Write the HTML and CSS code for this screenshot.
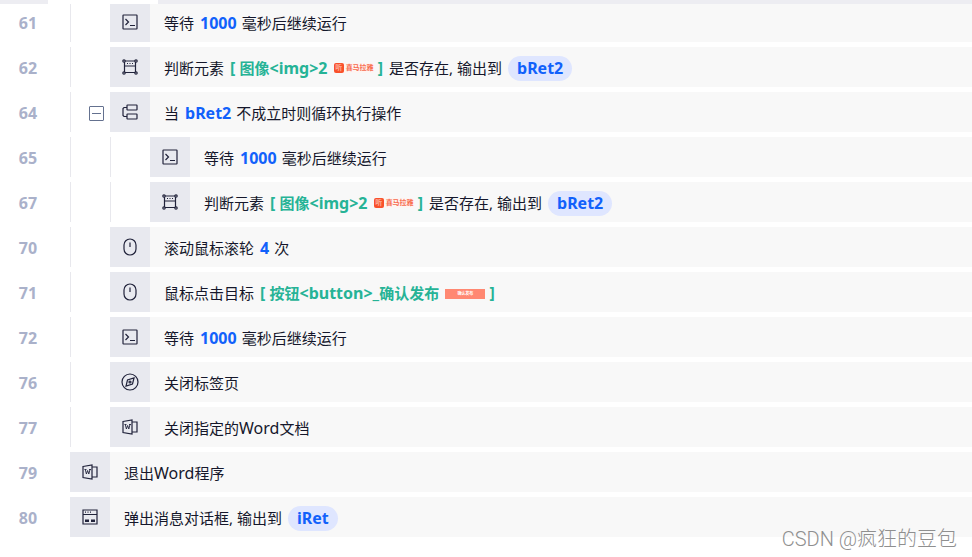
FILE: index.html
```html
<!DOCTYPE html>
<html lang="zh-CN">
<head>
    <meta charset="UTF-8">
    <meta name="viewport" content="width=device-width, initial-scale=1.0">
    <title>流程编辑</title>
    <link rel="stylesheet" href="styles.css">
</head>
<body>
    <!-- 图标 -->
    <svg class="sprite" aria-hidden="true">
        <symbol id="i-cmd" viewBox="0 0 16 16">
            <rect x="1" y="1" width="14" height="14" rx="0.5"/>
            <path d="M3.5 5 L6.5 8 L3.5 11 M8 11.5 H13"/>
        </symbol>
        <symbol id="i-element" viewBox="0 0 16 16">
            <path d="M2.5 3 V13 M13.5 3 V13 M3 2 H13 M3 13.5 H13 M2.5 7 H13.5"/>
            <path d="M5 4.5 H6 M7.5 4.5 H8.5 M10 4.5 H11"/>
            <circle cx="2" cy="2" r="1.2"/>
            <circle cx="14" cy="2" r="1.2"/>
            <circle cx="2" cy="14" r="1.2"/>
            <circle cx="14" cy="14" r="1.2"/>
        </symbol>
        <symbol id="i-loop" viewBox="0 0 16 16">
            <rect x="5" y="1" width="10" height="5" rx="0.5"/>
            <rect x="5" y="10" width="10" height="5" rx="0.5"/>
            <path d="M5 3.5 H2 L1 4.5 V11.5 L2 12.5 H5"/>
        </symbol>
        <symbol id="i-mouse" viewBox="0 0 16 18">
            <rect x="2" y="1" width="12" height="16" rx="6"/>
            <path d="M8 4.5 V9"/>
        </symbol>
        <symbol id="i-compass" viewBox="0 0 18 18">
            <circle cx="9" cy="9" r="8"/>
            <path d="M13 5 L11.5 11 L5 13 L6.5 7 Z"/>
            <circle cx="9" cy="9" r="1"/>
        </symbol>
        <symbol id="i-word" viewBox="0 0 16 16">
            <path d="M1 2.5 L10 1 V15 L1 13.5 Z M10 3 H15 V13 H10"/>
            <path class="thin" d="M2.5 5.5 H4.5 M7 5.5 H9 M3.3 5.5 L4.4 10 L5.6 6.5 L6.8 10 L8 5.5"/>
        </symbol>
        <symbol id="i-dialog" viewBox="0 0 16 16">
            <path d="M1 1 H15 V15 H1 Z M1 5.5 H15"/>
            <path d="M3 3.2 H4 M5.5 3.2 H6.5 M8 3.2 H9"/>
            <path class="fill" d="M3 10.5 H7 V13 H3 Z M9 10.5 H13 V13 H9 Z"/>
        </symbol>
    </svg>

    <div class="topbar"><span class="tab"></span></div>

    <ol class="steps">
        <li class="step">
            <span class="num">61</span>
            <span class="indent"></span>
            <span class="icon"><svg><use href="#i-cmd"/></svg></span>
            <p class="text">等待<b class="value">1000</b>毫秒后继续运行</p>
        </li>
        <li class="step">
            <span class="num">62</span>
            <span class="indent"></span>
            <span class="icon"><svg><use href="#i-element"/></svg></span>
            <p class="text">判断元素<b class="target">[ <span class="zh">图像</span>&lt;img&gt;2 <span class="thumb logo"><i>听</i>喜马拉雅</span> ]</b>是否存在, 输出到<b class="output">bRet2</b></p>
        </li>
        <li class="step">
            <span class="num">64</span>
            <span class="indent"><button class="fold" type="button" aria-label="折叠"></button></span>
            <span class="icon"><svg><use href="#i-loop"/></svg></span>
            <p class="text">当<b class="value">bRet2</b>不成立时则循环执行操作</p>
        </li>
        <li class="step">
            <span class="num">65</span>
            <span class="indent"></span>
            <span class="indent"></span>
            <span class="icon"><svg><use href="#i-cmd"/></svg></span>
            <p class="text">等待<b class="value">1000</b>毫秒后继续运行</p>
        </li>
        <li class="step">
            <span class="num">67</span>
            <span class="indent"></span>
            <span class="indent"></span>
            <span class="icon"><svg><use href="#i-element"/></svg></span>
            <p class="text">判断元素<b class="target">[ <span class="zh">图像</span>&lt;img&gt;2 <span class="thumb logo"><i>听</i>喜马拉雅</span> ]</b>是否存在, 输出到<b class="output">bRet2</b></p>
        </li>
        <li class="step">
            <span class="num">70</span>
            <span class="indent"></span>
            <span class="icon"><svg class="big"><use href="#i-mouse"/></svg></span>
            <p class="text">滚动鼠标滚轮<b class="value">4</b>次</p>
        </li>
        <li class="step">
            <span class="num">71</span>
            <span class="indent"></span>
            <span class="icon"><svg class="big"><use href="#i-mouse"/></svg></span>
            <p class="text">鼠标点击目标<b class="target">[ <span class="zh">按钮</span>&lt;button&gt;_<span class="zh">确认发布</span> <span class="thumb confirm">确认发布</span> ]</b></p>
        </li>
        <li class="step">
            <span class="num">72</span>
            <span class="indent"></span>
            <span class="icon"><svg><use href="#i-cmd"/></svg></span>
            <p class="text">等待<b class="value">1000</b>毫秒后继续运行</p>
        </li>
        <li class="step">
            <span class="num">76</span>
            <span class="indent"></span>
            <span class="icon"><svg class="big"><use href="#i-compass"/></svg></span>
            <p class="text">关闭标签页</p>
        </li>
        <li class="step">
            <span class="num">77</span>
            <span class="indent"></span>
            <span class="icon"><svg><use href="#i-word"/></svg></span>
            <p class="text">关闭指定的<span class="en">Word</span>文档</p>
        </li>
        <li class="step">
            <span class="num">79</span>
            <span class="icon"><svg><use href="#i-word"/></svg></span>
            <p class="text">退出<span class="en">Word</span>程序</p>
        </li>
        <li class="step">
            <span class="num">80</span>
            <span class="icon"><svg><use href="#i-dialog"/></svg></span>
            <p class="text">弹出消息对话框, 输出到<b class="output">iRet</b></p>
        </li>
    </ol>

    <div class="watermark">CSDN @疯狂的豆包</div>
</body>
</html>
```

FILE: styles.css
```css
* {
    box-sizing: border-box;
}
body {
    margin: 0;
    min-height: 100vh;
    position: relative;
    overflow: hidden;
    background: #fff;
    color: #15172b;
    font-family: "Noto Sans", "Noto Sans CJK SC", sans-serif;
    font-size: 15px;
}
.sprite {
    position: absolute;
    width: 0;
    height: 0;
}
/* bottom edge of the tab bar, lies over the scrolled list */
.topbar {
    position: absolute;
    top: 0;
    left: 0;
    right: 0;
    z-index: 1;
    height: 4px;
    padding-left: 48px;
    background: #ededf2;
}
.tab {
    display: block;
    width: 110px;
    height: 4px;
    background: #fff;
}
.steps {
    display: flex;
    flex-direction: column;
    gap: 5px;
    margin: 0;
    padding: 2px 0 0;
    list-style: none;
}
.step {
    display: flex;
    height: 40px;
}
.num {
    flex: none;
    width: 70px;
    padding-right: 14px;
    font-size: 16px;
    line-height: 42px;
    text-align: center;
    font-weight: bold;
    color: #aab1ca;
}
.indent {
    flex: none;
    display: flex;
    align-items: center;
    justify-content: flex-end;
    width: 40px;
    padding-right: 6px;
    border-left: 1px solid #e8e8ed;
}
.fold {
    display: flex;
    align-items: center;
    justify-content: center;
    width: 15px;
    height: 15px;
    margin-top: 2px;
    padding: 0;
    border: 1px solid #64718f;
    border-radius: 1px;
    background: #fff;
    cursor: pointer;
}
.fold::before {
    content: "";
    width: 9px;
    height: 1px;
    background: #64718f;
}
.icon {
    flex: none;
    display: flex;
    align-items: center;
    justify-content: center;
    width: 40px;
    background: #e8e9ef;
}
.icon svg {
    width: 16px;
    height: 16px;
    fill: none;
    stroke: #20223a;
    stroke-width: 1.2;
}
.icon svg.big {
    width: 18px;
    height: 18px;
}
.thin {
    stroke-width: 0.9;
}
.fill {
    fill: #20223a;
    stroke: none;
}
.text {
    flex: 1;
    margin: 0;
    padding: 0 14px;
    background: #f8f8f8;
    line-height: 42px;
    white-space: nowrap;
}
.en {
    font-size: 16px;
    line-height: 1;
}
.value {
    margin: 0 5px 0 6px;
    font-size: 16px;
    line-height: 1;
    color: #1161fb;
}
.target {
    margin: 0 6px;
    font-size: 16px;
    line-height: 1;
    color: #26b396;
}
.zh {
    font-size: 15px;
}
.output {
    display: inline-block;
    margin-left: 6px;
    padding: 0 9px;
    border-radius: 13px;
    background: #dfe6ff;
    color: #1161fb;
    font-size: 16px;
    line-height: 25px;
}
.thumb {
    display: inline-flex;
    align-items: center;
    justify-content: center;
    width: 40px;
    height: 10px;
    margin-left: 2px;
    vertical-align: 4px;
    line-height: 10px;
}
.logo {
    gap: 2px;
    background: #fdf5f3;
    color: #f8694c;
    font-size: 7px;
}
.logo i {
    width: 10px;
    border-radius: 2px;
    background: #f9502b;
    color: #fdb09c;
    font-style: normal;
    text-align: center;
}
.confirm {
    background: #ff8872;
    color: #fff;
    font-size: 4px;
}
.watermark {
    position: absolute;
    right: 15px;
    bottom: 5px;
    color: #8f8f8f;
    font-family: Roboto, "Noto Sans CJK SC", sans-serif;
    font-size: 20px;
    font-weight: 300;
    line-height: 26px;
}
```
